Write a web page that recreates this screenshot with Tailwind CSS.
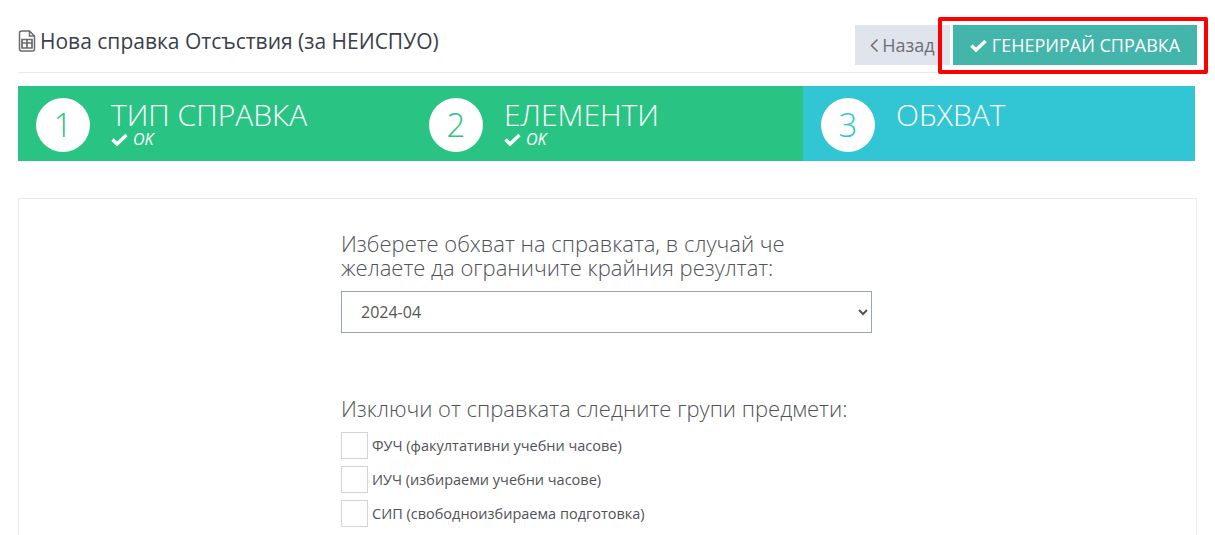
<!DOCTYPE html>
<html lang="en">
<head>
  <meta charset="UTF-8" />
  <title>Нова справка</title>
  <script src="https://cdn.jsdelivr.net/npm/@tailwindcss/browser@4"></script>
</head>
<body class="bg-white text-[#676a6c] font-['Open_Sans',sans-serif] overflow-hidden h-[535px] relative">

  <!-- Header -->
  <div class="mx-[18px] h-[73px] border-b border-[#e7eaec] flex justify-between">
    <h1 class="flex items-center gap-[4px] h-[40px] mt-[21px] text-[21px] leading-[40px] text-[#3a3f4a]">
      <svg width="18" height="22" viewBox="0 0 18 22" fill="none" stroke="#6b6b6b" stroke-width="1.5">
        <path d="M1.5 3q0-2 2-2h8l5 5v13q0 2-2 2h-11q-2 0-2-2z"/>
        <path d="M11.5 1v5h5"/>
        <path d="M4 9.5h10v8.5h-10zM4 13h10M9 9.5v8.5" stroke-width="1.7"/>
      </svg>
      Нова справка Отсъствия (за НЕИСПУО)
    </h1>
    <div class="flex gap-[3px] pt-[25px] pr-0 items-start">
      <button class="h-[40px] w-[95px] bg-[#e0e4ec] text-[#6b6f75] text-[18px] flex items-center justify-center gap-[3px]">
        <svg width="9" height="15" viewBox="0 0 9 15" fill="none" stroke="#7a6f66" stroke-width="1.6"><path d="M7.5 1.5 1.5 7.5l6 6"/></svg>
        Назад
      </button>
      <button class="h-[40px] w-[244px] bg-[#44b5ab] text-white text-[18px] flex items-center justify-center gap-[5px]">
        <svg width="17" height="13" viewBox="0 0 17 13" fill="none" stroke="white" stroke-width="3.4"><path d="M1.5 6.5 6 11 15.5 2"/></svg>
        ГЕНЕРИРАЙ СПРАВКА
      </button>
    </div>
  </div>

  <!-- Red annotation round the generate button -->
  <div class="absolute left-[938px] top-[17px] w-[270px] h-[57px] border-[4px] border-[#ff0000] rounded-[2px]"></div>

  <!-- Steps -->
  <div class="mx-[18px] mt-[13px] h-[75px] grid grid-cols-[392.5px_392.5px_392px] text-white">
    <div class="bg-[#29c484] flex pl-[18px] pt-[12px] gap-[21px]">
      <div class="w-[54px] h-[54px] rounded-full bg-white text-[#29c484] text-[33px] font-light flex items-center justify-center">1</div>
      <div>
        <div class="text-[30px] font-light leading-[34px]">ТИП СПРАВКА</div>
        <div class="flex items-center gap-[5px] text-[16px] italic leading-[18px] -mt-[2px]">
          <svg width="17" height="13" viewBox="0 0 17 13" fill="none" stroke="white" stroke-width="3.4"><path d="M1.5 6.5 6 11 15.5 2"/></svg>
          OK
        </div>
      </div>
    </div>
    <div class="bg-[#29c484] flex pl-[18.5px] pt-[12px] gap-[21px]">
      <div class="w-[54px] h-[54px] rounded-full bg-white text-[#29c484] text-[33px] font-light flex items-center justify-center">2</div>
      <div>
        <div class="text-[30px] font-light leading-[34px]">ЕЛЕМЕНТИ</div>
        <div class="flex items-center gap-[5px] text-[16px] italic leading-[18px] -mt-[2px]">
          <svg width="17" height="13" viewBox="0 0 17 13" fill="none" stroke="white" stroke-width="3.4"><path d="M1.5 6.5 6 11 15.5 2"/></svg>
          OK
        </div>
      </div>
    </div>
    <div class="bg-[#32c6d5] flex pl-[18px] pt-[12px] gap-[21px]">
      <div class="w-[54px] h-[54px] rounded-full bg-white text-[#32c6d5] text-[33px] font-light flex items-center justify-center">3</div>
      <div class="text-[30px] font-light leading-[34px]">ОБХВАТ</div>
    </div>
  </div>

  <!-- Panel -->
  <div class="mx-[18px] mt-[37px] border border-[#e7eaec] h-[400px] pl-[322px] pt-[32px]">
    <div class="w-[531px]">
      <p class="text-[22px] font-light leading-[24px] w-[480px] text-[#4f5358]">Изберете обхват на справката, в случай че желаете да ограничите крайния резултат:</p>
      <select class="mt-[12px] w-[531px] h-[42px] border border-[#97a3bd] pl-[15px] text-[16px] text-[#555] bg-white">
        <option>2024-04</option>
      </select>
      <p class="mt-[63px] text-[22px] font-light leading-[24px] text-[#4f5358]">Изключи от справката следните групи предмети:</p>
      <div class="mt-[12px] flex flex-col gap-[7px] text-[14.5px] text-[#4f5358]">
        <label class="flex items-center gap-[4px] h-[27px]"><span class="w-[27px] h-[27px] border border-[#d3d3d0] bg-white"></span>ФУЧ (факултативни учебни часове)</label>
        <label class="flex items-center gap-[4px] h-[27px]"><span class="w-[27px] h-[27px] border border-[#d3d3d0] bg-white"></span>ИУЧ (избираеми учебни часове)</label>
        <label class="flex items-center gap-[4px] h-[27px]"><span class="w-[27px] h-[27px] border border-[#d3d3d0] bg-white"></span>СИП (свободноизбираема подготовка)</label>
      </div>
    </div>
  </div>
</body>
</html>
